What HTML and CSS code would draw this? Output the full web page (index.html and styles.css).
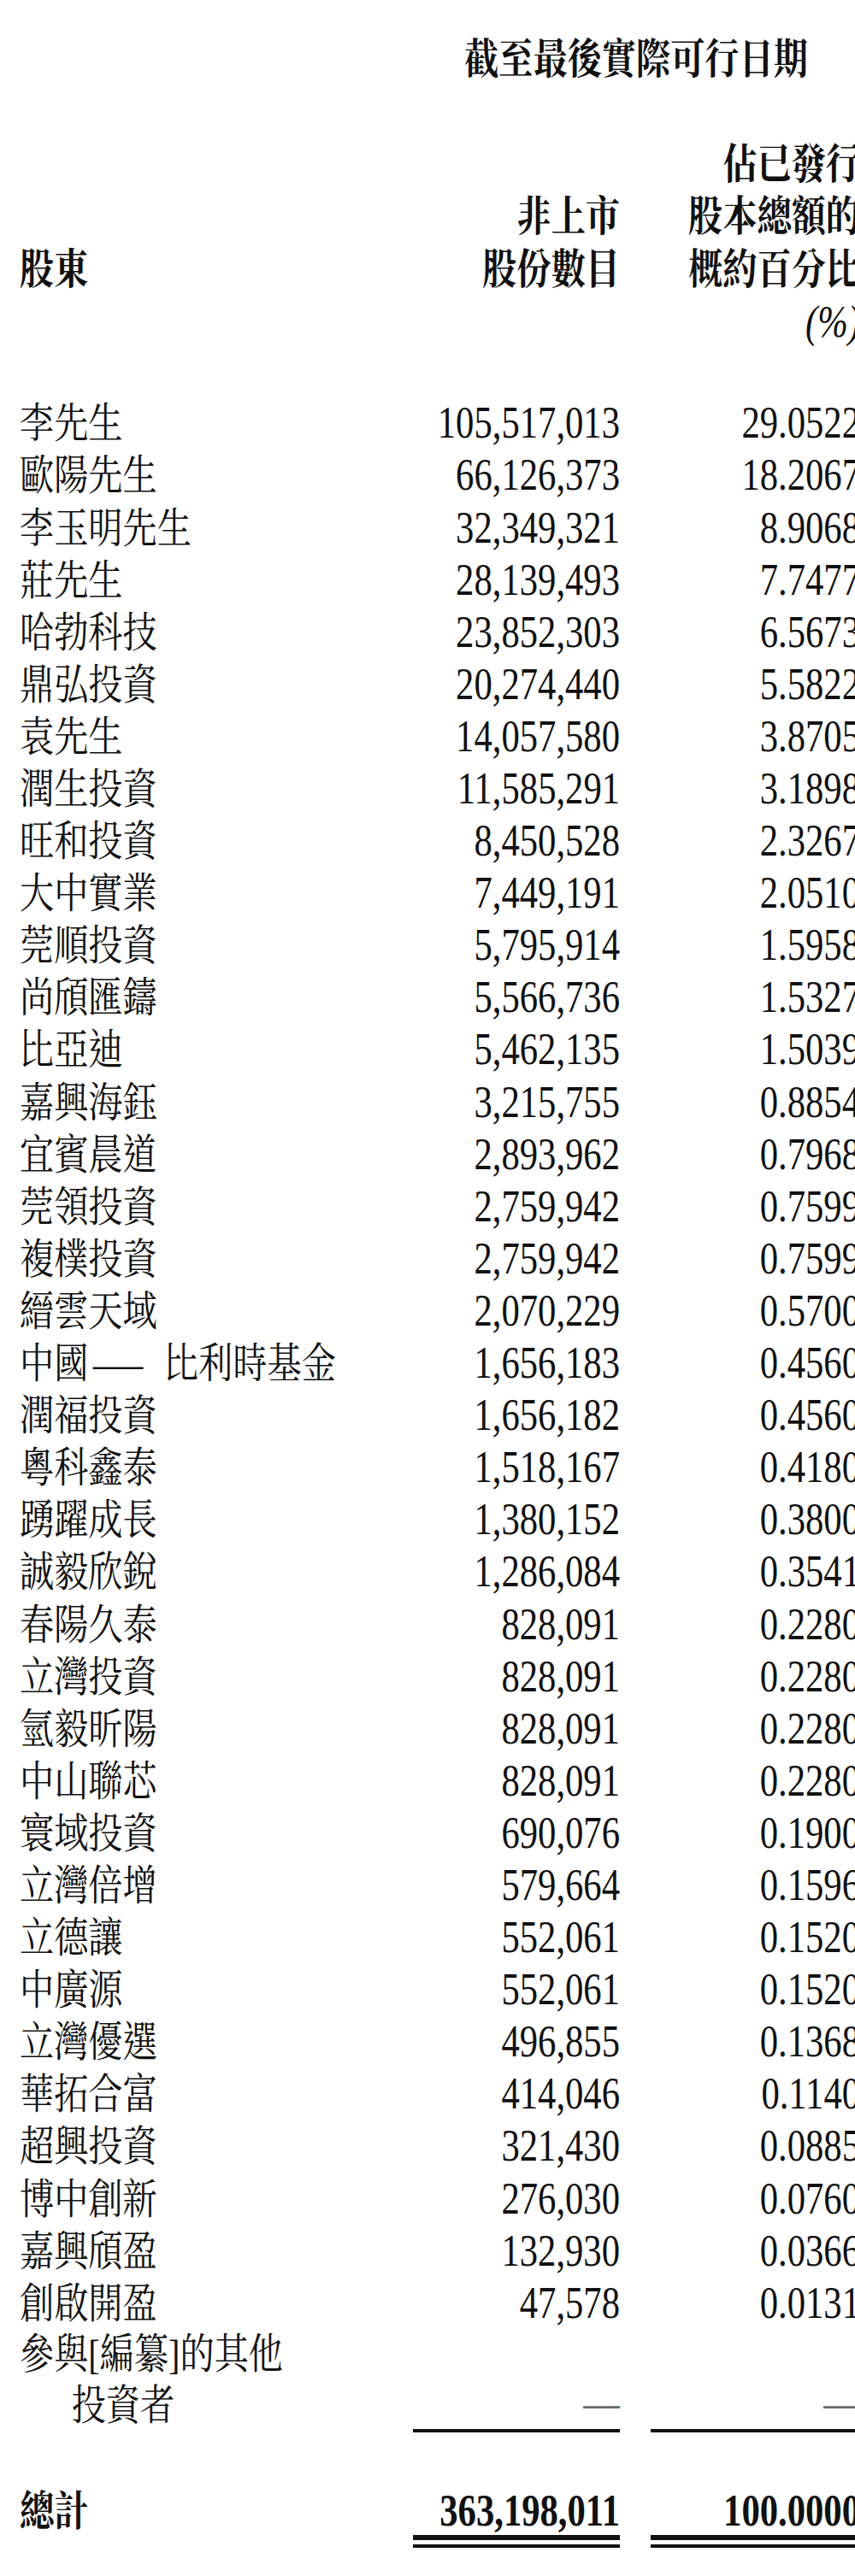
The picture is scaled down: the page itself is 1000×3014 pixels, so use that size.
FILE: index.html
```html
<!DOCTYPE html>
<html lang="zh-Hant">
<head>
<meta charset="utf-8">
<title>股東持股</title>
<link rel="stylesheet" href="styles.css">
</head>
<body>
<main class="sheet">
  <div class="row title"><div class="span"><span class="t">截至最後實際可行日期</span></div></div>

  <div class="row head">
    <div class="name b"><span class="t">股東</span></div>
    <div class="num hd"><span class="t">非上市<br>股份數目</span></div>
    <div class="num hd"><span class="t">佔已發行<br>股本總額的<br>概約百分比</span></div>
  </div>
  <div class="row unit"><div class="num pct"><span class="t">(%)</span></div></div>

  <div class="rows">
    <div class="row"><div class="name"><span class="t">李先生</span></div><div class="num"><span class="t">105,517,013</span></div><div class="num"><span class="t">29.0522</span></div></div>
    <div class="row"><div class="name"><span class="t">歐陽先生</span></div><div class="num"><span class="t">66,126,373</span></div><div class="num"><span class="t">18.2067</span></div></div>
    <div class="row"><div class="name"><span class="t">李玉明先生</span></div><div class="num"><span class="t">32,349,321</span></div><div class="num"><span class="t">8.9068</span></div></div>
    <div class="row"><div class="name"><span class="t">莊先生</span></div><div class="num"><span class="t">28,139,493</span></div><div class="num"><span class="t">7.7477</span></div></div>
    <div class="row"><div class="name"><span class="t">哈勃科技</span></div><div class="num"><span class="t">23,852,303</span></div><div class="num"><span class="t">6.5673</span></div></div>
    <div class="row"><div class="name"><span class="t">鼎弘投資</span></div><div class="num"><span class="t">20,274,440</span></div><div class="num"><span class="t">5.5822</span></div></div>
    <div class="row"><div class="name"><span class="t">袁先生</span></div><div class="num"><span class="t">14,057,580</span></div><div class="num"><span class="t">3.8705</span></div></div>
    <div class="row"><div class="name"><span class="t">潤生投資</span></div><div class="num"><span class="t">11,585,291</span></div><div class="num"><span class="t">3.1898</span></div></div>
    <div class="row"><div class="name"><span class="t">旺和投資</span></div><div class="num"><span class="t">8,450,528</span></div><div class="num"><span class="t">2.3267</span></div></div>
    <div class="row"><div class="name"><span class="t">大中實業</span></div><div class="num"><span class="t">7,449,191</span></div><div class="num"><span class="t">2.0510</span></div></div>
    <div class="row"><div class="name"><span class="t">莞順投資</span></div><div class="num"><span class="t">5,795,914</span></div><div class="num"><span class="t">1.5958</span></div></div>
    <div class="row"><div class="name"><span class="t">尚頎匯鑄</span></div><div class="num"><span class="t">5,566,736</span></div><div class="num"><span class="t">1.5327</span></div></div>
    <div class="row"><div class="name"><span class="t">比亞迪</span></div><div class="num"><span class="t">5,462,135</span></div><div class="num"><span class="t">1.5039</span></div></div>
    <div class="row"><div class="name"><span class="t">嘉興海鈺</span></div><div class="num"><span class="t">3,215,755</span></div><div class="num"><span class="t">0.8854</span></div></div>
    <div class="row"><div class="name"><span class="t">宜賓晨道</span></div><div class="num"><span class="t">2,893,962</span></div><div class="num"><span class="t">0.7968</span></div></div>
    <div class="row"><div class="name"><span class="t">莞領投資</span></div><div class="num"><span class="t">2,759,942</span></div><div class="num"><span class="t">0.7599</span></div></div>
    <div class="row"><div class="name"><span class="t">複樸投資</span></div><div class="num"><span class="t">2,759,942</span></div><div class="num"><span class="t">0.7599</span></div></div>
    <div class="row"><div class="name"><span class="t">縉雲天域</span></div><div class="num"><span class="t">2,070,229</span></div><div class="num"><span class="t">0.5700</span></div></div>
    <div class="row"><div class="name"><span class="t">中國<span class="sep">—</span>比利時基金</span></div><div class="num"><span class="t">1,656,183</span></div><div class="num"><span class="t">0.4560</span></div></div>
    <div class="row"><div class="name"><span class="t">潤福投資</span></div><div class="num"><span class="t">1,656,182</span></div><div class="num"><span class="t">0.4560</span></div></div>
    <div class="row"><div class="name"><span class="t">粵科鑫泰</span></div><div class="num"><span class="t">1,518,167</span></div><div class="num"><span class="t">0.4180</span></div></div>
    <div class="row"><div class="name"><span class="t">踴躍成長</span></div><div class="num"><span class="t">1,380,152</span></div><div class="num"><span class="t">0.3800</span></div></div>
    <div class="row"><div class="name"><span class="t">誠毅欣銳</span></div><div class="num"><span class="t">1,286,084</span></div><div class="num"><span class="t">0.3541</span></div></div>
    <div class="row"><div class="name"><span class="t">春陽久泰</span></div><div class="num"><span class="t">828,091</span></div><div class="num"><span class="t">0.2280</span></div></div>
    <div class="row"><div class="name"><span class="t">立灣投資</span></div><div class="num"><span class="t">828,091</span></div><div class="num"><span class="t">0.2280</span></div></div>
    <div class="row"><div class="name"><span class="t">氫毅昕陽</span></div><div class="num"><span class="t">828,091</span></div><div class="num"><span class="t">0.2280</span></div></div>
    <div class="row"><div class="name"><span class="t">中山聯芯</span></div><div class="num"><span class="t">828,091</span></div><div class="num"><span class="t">0.2280</span></div></div>
    <div class="row"><div class="name"><span class="t">寰域投資</span></div><div class="num"><span class="t">690,076</span></div><div class="num"><span class="t">0.1900</span></div></div>
    <div class="row"><div class="name"><span class="t">立灣倍增</span></div><div class="num"><span class="t">579,664</span></div><div class="num"><span class="t">0.1596</span></div></div>
    <div class="row"><div class="name"><span class="t">立德讓</span></div><div class="num"><span class="t">552,061</span></div><div class="num"><span class="t">0.1520</span></div></div>
    <div class="row"><div class="name"><span class="t">中廣源</span></div><div class="num"><span class="t">552,061</span></div><div class="num"><span class="t">0.1520</span></div></div>
    <div class="row"><div class="name"><span class="t">立灣優選</span></div><div class="num"><span class="t">496,855</span></div><div class="num"><span class="t">0.1368</span></div></div>
    <div class="row"><div class="name"><span class="t">華拓合富</span></div><div class="num"><span class="t">414,046</span></div><div class="num"><span class="t">0.1140</span></div></div>
    <div class="row"><div class="name"><span class="t">超興投資</span></div><div class="num"><span class="t">321,430</span></div><div class="num"><span class="t">0.0885</span></div></div>
    <div class="row"><div class="name"><span class="t">博中創新</span></div><div class="num"><span class="t">276,030</span></div><div class="num"><span class="t">0.0760</span></div></div>
    <div class="row"><div class="name"><span class="t">嘉興頎盈</span></div><div class="num"><span class="t">132,930</span></div><div class="num"><span class="t">0.0366</span></div></div>
    <div class="row"><div class="name"><span class="t">創啟開盈</span></div><div class="num"><span class="t">47,578</span></div><div class="num"><span class="t">0.0131</span></div></div>

    <div class="row multi">
      <div class="name two"><span class="t"><span class="ln">參與[編纂]的其他</span><span class="ln indent">投資者</span></span></div>
      <div class="num rule"><span class="t nil">—</span></div>
      <div class="num rule"><span class="t nil">—</span></div>
    </div>
  </div>

  <div class="row total">
    <div class="name b"><span class="t">總計</span></div>
    <div class="dbl-out"><div class="num b dbl-in"><span class="t">363,198,011</span></div></div>
    <div class="dbl-out"><div class="num b dbl-in"><span class="t">100.0000</span></div></div>
  </div>
</main>
</body>
</html>
```

FILE: styles.css
```css
html {
  background: #ffffff;
}

body {
  margin: 0;
  background: #ffffff;
  color: #111111;
}

.sheet {
  width: 1000px;
  box-sizing: border-box;
  padding: 39px 0 0 23px;
  font-family: "Liberation Serif", "Noto Serif CJK TC", "Noto Sans CJK TC", serif;
  line-height: 61.1px;
}

.row {
  display: grid;
  grid-template-columns: 424px 242px 245px;
  column-gap: 36px;
  height: 61.1px;
  align-items: baseline;
}

/* every cell is a flex box; its text is compressed horizontally
   around the edge it is aligned to */
.name,
.num,
.span {
  display: flex;
  min-width: 0;
}

.name {
  justify-content: flex-start;
  font-size: 49px;
}

.num {
  justify-content: flex-end;
  font-size: 52px;
  text-align: right;
}

.t {
  display: block;
  flex: none;
  white-space: nowrap;
  transform: scaleX(0.82);
}

.name .t {
  transform-origin: left center;
}

.num .t {
  transform-origin: right center;
}

.b {
  font-weight: 700;
}

.title {
  margin-bottom: 62.3px;
}

.title .span {
  grid-column: 2 / 4;
  justify-content: center;
  font-size: 49px;
  font-weight: 700;
}

.title .t {
  transform-origin: center center;
}

.head {
  height: auto;
  align-items: end;
}

.head .hd {
  font-size: 49px;
  font-weight: 700;
}

.unit .pct {
  grid-column: 3;
  font-style: italic;
}

.rows {
  margin-top: 57.6px;
}

.sep {
  display: inline-block;
  transform: scaleX(1.45);
  margin: 0 41px 0 18px;
}

.multi {
  height: 121.4px;
  align-items: end;
}

.two {
  align-self: start;
  line-height: 60px;
}

.ln {
  display: block;
}

.indent {
  padding-left: 74px;
}

.rule {
  border-bottom: 4px solid #111111;
  line-height: 60px;
}

.nil {
  color: #6b6b6b;
}

.total {
  height: auto;
  margin-top: 61.4px;
}

.dbl-out {
  border-bottom: 4px solid #111111;
  padding-bottom: 5px;
}

.dbl-in {
  border-bottom: 6px solid #111111;
  line-height: 57px;
}
```
